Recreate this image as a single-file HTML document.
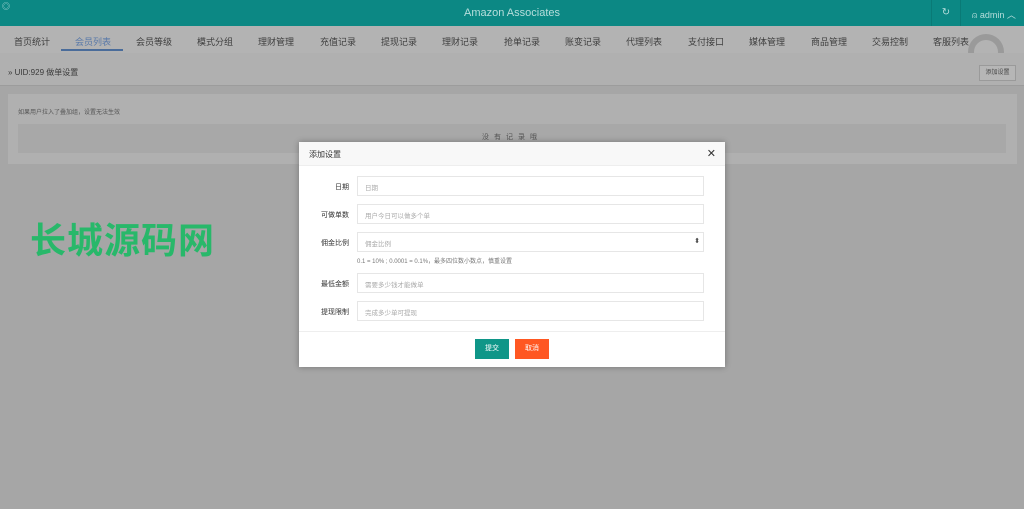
<!DOCTYPE html>
<html><head><meta charset="utf-8"><style>
*{margin:0;padding:0;box-sizing:border-box}
body{width:1024px;height:509px;overflow:hidden;background:#a6a6a6;font-family:"Liberation Sans","Noto Sans CJK SC",sans-serif;position:relative;font-size:12px}
.hd{position:absolute;left:0;top:0;width:1024px;height:26px;background:#0c8884;color:#b7dedc}
.hd .t{position:absolute;left:0;width:1024px;top:7px;text-align:center;font-size:11px}
.hd .r1{position:absolute;left:931px;top:0;width:30px;height:26px;border-left:1px solid #0a7a76;border-right:1px solid #0a7a76;text-align:center;line-height:26px;font-size:10px}
.hd .r2{position:absolute;left:972px;top:8px;font-size:9px}
.nav{position:absolute;left:0;top:26px;width:1024px;height:27px;background:#b3b3b3;color:#3e3e3e;font-size:9px}
.nav span{position:absolute;top:9px}
.nav .a{color:#5878a8}
.ul{position:absolute;left:61px;top:49px;width:62px;height:2px;background:#4a6c9a}
.bc{position:absolute;left:0;top:53px;width:1024px;height:33px;background:#b0b0b0;border-bottom:1px solid #9c9c9c;font-size:8px;color:#3a3a3a}
.btn1{position:absolute;left:979px;top:65px;width:37px;height:16px;border:1px solid #9a9a9a;background:#b6b6b6;font-size:6px;text-align:center;line-height:14px;color:#444}
.card{position:absolute;left:8px;top:94px;width:1009px;height:70px;background:#b0b0b0}
.card .n{position:absolute;left:10px;top:13px;font-size:6px;color:#555}
.card .g{position:absolute;left:10px;top:30px;width:988px;height:29px;background:#a8a8a8;text-align:center;font-size:7px;letter-spacing:5px;color:#555;line-height:28px}
.wm{position:absolute;left:30px;top:221px;font-size:36px;font-weight:bold;color:#28b86a;letter-spacing:1px;line-height:40px}
.m{position:absolute;left:299px;top:142px;width:426px;height:225px;background:#fff;box-shadow:0 0 6px rgba(0,0,0,.3)}
.mh{height:24px;background:#f8f8f8;border-bottom:1px solid #eee;font-size:8px;color:#333;padding:7px 0 0 10px;position:relative}
.mh .x{position:absolute;right:9px;top:5px;font-size:11px}
.row{position:absolute;left:0;width:426px}
.row label{position:absolute;right:376px;top:6px;font-size:7px;color:#333;white-space:nowrap}
.row .in{position:absolute;left:58px;top:0;width:347px;height:20px;border:1px solid #e6e6e6;font-size:6.5px;color:#aaa;padding:5px 0 0 7px}
.tip{position:absolute;left:58px;top:24px;font-size:6px;color:#777;white-space:nowrap}
.ft{position:absolute;left:0;top:189px;width:426px;border-top:1px solid #eee}
.b{position:absolute;top:197px;width:34px;height:20px;color:#fff;font-size:7px;text-align:center;line-height:20px}
</style></head><body>
<div class="hd"><div style="position:absolute;left:2px;top:1px;font-size:8px">◎</div><div class="t">Amazon Associates</div><div class="r1">↻</div><div class="r2">⍝ admin ︿</div></div>
<div class="nav">
<span style="left:14px">首页统计</span><span class="a" style="left:75px">会员列表</span><span style="left:136px">会员等级</span><span style="left:197px">模式分组</span><span style="left:258px">理财管理</span><span style="left:320px">充值记录</span><span style="left:381px">提现记录</span><span style="left:442px">理财记录</span><span style="left:504px">抢单记录</span><span style="left:565px">账变记录</span><span style="left:626px">代理列表</span><span style="left:688px">支付接口</span><span style="left:749px">媒体管理</span><span style="left:811px">商品管理</span><span style="left:872px">交易控制</span><span style="left:933px">客服列表</span>
<div style="position:absolute;left:968px;top:8px;width:36px;height:36px;border:6px solid #9a9a9a;border-bottom-color:transparent;border-radius:50%"></div>
</div>
<div class="ul"></div>
<div class="bc"><span style="position:absolute;left:8px;top:14px">» UID:929 做单设置</span></div>
<div class="btn1">添加设置</div>
<div class="card"><div class="n">如果用户拉入了叠加组，设置无法生效</div><div class="g">没有记录哦</div></div>
<div class="wm">长城源码网</div>
<div class="m">
<div class="mh">添加设置<span class="x">✕</span></div>
<div class="row" style="top:34px"><label>日期</label><div class="in">日期</div></div>
<div class="row" style="top:62px"><label>可做单数</label><div class="in">用户今日可以做多个单</div></div>
<div class="row" style="top:90px"><label>佣金比例</label><div class="in">佣金比例<span style="position:absolute;right:3px;top:4px;color:#444;font-size:7px">⬍</span></div><div class="tip">0.1 = 10% ; 0.0001 = 0.1%，最多四位数小数点，慎重设置</div></div>
<div class="row" style="top:131px"><label>最低金额</label><div class="in">需要多少钱才能做单</div></div>
<div class="row" style="top:159px"><label>提现限制</label><div class="in">完成多少单可提现</div></div>
<div class="ft"></div>
<div class="b" style="left:176px;background:#0f9688">提交</div>
<div class="b" style="left:216px;background:#ff5722">取消</div>
</div>
</body></html>
